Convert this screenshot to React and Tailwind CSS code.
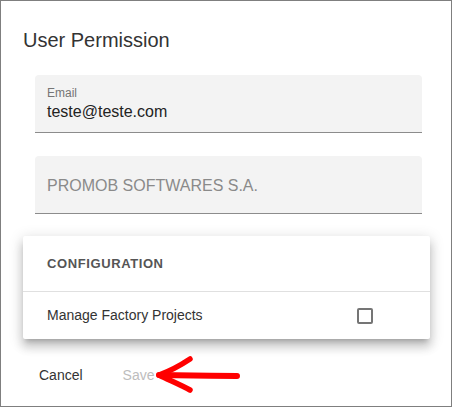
const font = { fontFamily: '"Liberation Sans", Arial, sans-serif' };

const FilledField = ({ label, value, disabled }) => (
  <div className="ml-[12px] w-[387px] h-[58px] bg-[#f3f3f3] rounded-t-[4px] border-b border-[#8c8c8c] px-[12px] flex flex-col justify-center">
    {label && (
      <span className="text-[12px] leading-[14px] text-[#757575] mt-[1px]">{label}</span>
    )}
    <span
      className={
        "text-[16px] leading-[20px] " +
        (disabled ? "text-[#8a8a8a] mt-[2px]" : "text-[#222] mt-[2px]")
      }
    >
      {value}
    </span>
  </div>
);

const RedArrow = () => (
  <div className="absolute left-[155px] top-[343px] w-[108px] h-[50px] bg-white" aria-hidden="true">
    <svg width="108" height="50" viewBox="0 0 108 50">
      <path
        d="M3 31 C25 31.5 55 31.5 81 32"
        stroke="#ff0000"
        strokeWidth="6"
        strokeLinecap="round"
        fill="none"
      />
      <path
        d="M34 15 C25 21 14 27 3 31 C13 36 25 41 34 46"
        stroke="#ff0000"
        strokeWidth="5.5"
        strokeLinecap="round"
        strokeLinejoin="round"
        fill="none"
      />
    </svg>
  </div>
);

export default function App() {
  return (
    <div
      className="relative w-[452px] h-[407px] border border-[#7f7f7f] bg-white overflow-hidden"
      style={font}
    >
      <div className="px-[22px] pt-[23px] flex flex-col">
        {/* Title */}
        <h2 className="text-[20px] leading-[32px] text-[#333]">User Permission</h2>

        {/* Fields */}
        <div className="mt-[19px] flex flex-col gap-[23px]">
          <FilledField label="Email" value="teste@teste.com" />
          <FilledField value="PROMOB SOFTWARES S.A." disabled />
        </div>
      </div>

      {/* Configuration card */}
      <RedArrow />
      <div className="relative ml-[22px] mt-[22px] w-[407px] bg-white rounded-[2px] shadow-[0px_5px_5px_-3px_rgba(0,0,0,0.2),0px_8px_10px_1px_rgba(0,0,0,0.14),0px_3px_14px_2px_rgba(0,0,0,0.12)]">
        <div className="h-[56px] px-[24px] flex items-center border-b border-[#e0e0e0]">
          <span className="text-[13px] font-bold tracking-[0.6px] text-[#555]">CONFIGURATION</span>
        </div>
        <div className="h-[47px] pl-[24px] pr-[57px] flex items-center justify-between">
          <span className="text-[14px] text-[#333]">Manage Factory Projects</span>
          <span className="w-[16px] h-[16px] border-2 border-[#757575] rounded-[2px]" />
        </div>
      </div>

      {/* Actions */}
      <div className="relative mt-[26px] ml-[38px] flex items-center gap-[40px] text-[14px] leading-[20px]">
        <button type="button" className="text-[#333]">Cancel</button>
        <button type="button" className="text-[#bdbdbd]" disabled>Save</button>
      </div>
    </div>
  );
}
